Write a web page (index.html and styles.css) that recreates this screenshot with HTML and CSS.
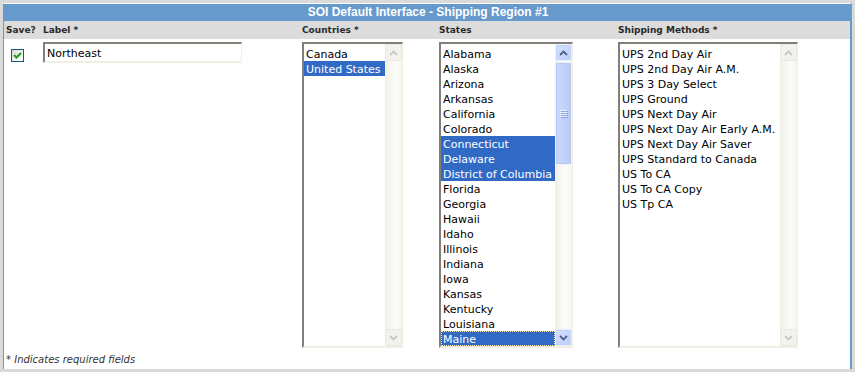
FILE: index.html
```html
<!DOCTYPE html>
<html>
<head>
<meta charset="utf-8">
<link rel="stylesheet" href="styles.css">
</head>
<body>
<div class="frame">
  <div class="title">SOI Default Interface - Shipping Region #1</div>
  <div class="cols head">
    <div>Save?</div>
    <div>Label *</div>
    <div>Countries *</div>
    <div>States</div>
    <div>Shipping Methods *</div>
  </div>
  <div class="cols content">
    <div>
      <div class="chk">
        <svg width="11" height="11" viewBox="0 0 11 11"><polyline points="2,5 4.5,7.5 9,3" fill="none" stroke="#21a121" stroke-width="2.2"/></svg>
      </div>
    </div>
    <div><div class="input">Northeast</div></div>
    <div>
      <div class="lb countries">
        <div class="items">
          <div class="it">Canada</div>
          <div class="it sel">United States</div>
        </div>
        <div class="sb off">
          <div class="btn"><svg width="9" height="6" viewBox="0 0 9 6"><polyline points="1,5 4.5,1.5 8,5" fill="none" stroke="#c9c8c0" stroke-width="1.8"/></svg></div>
          <div class="track"></div>
          <div class="btn"><svg width="9" height="6" viewBox="0 0 9 6"><polyline points="1,1 4.5,4.5 8,1" fill="none" stroke="#c9c8c0" stroke-width="1.8"/></svg></div>
        </div>
      </div>
    </div>
    <div>
      <div class="lb states">
        <div class="items">
          <div class="it">Alabama</div>
          <div class="it">Alaska</div>
          <div class="it">Arizona</div>
          <div class="it">Arkansas</div>
          <div class="it">California</div>
          <div class="it">Colorado</div>
          <div class="it sel">Connecticut</div>
          <div class="it sel">Delaware</div>
          <div class="it sel">District of Columbia</div>
          <div class="it">Florida</div>
          <div class="it">Georgia</div>
          <div class="it">Hawaii</div>
          <div class="it">Idaho</div>
          <div class="it">Illinois</div>
          <div class="it">Indiana</div>
          <div class="it">Iowa</div>
          <div class="it">Kansas</div>
          <div class="it">Kentucky</div>
          <div class="it">Louisiana</div>
          <div class="it sel focus">Maine</div>
        </div>
        <div class="sb on">
          <div class="btn"><svg width="9" height="6" viewBox="0 0 9 6"><polyline points="1,5 4.5,1.5 8,5" fill="none" stroke="#4d6185" stroke-width="1.8"/></svg></div>
          <div class="thumb">
            <svg width="8" height="8" viewBox="0 0 8 8">
              <rect x="0" y="0" width="7" height="1" fill="#eef3ff"/>
              <rect x="1" y="1" width="7" height="1" fill="#8ca6e4"/>
              <rect x="0" y="2" width="7" height="1" fill="#eef3ff"/>
              <rect x="1" y="3" width="7" height="1" fill="#8ca6e4"/>
              <rect x="0" y="4" width="7" height="1" fill="#eef3ff"/>
              <rect x="1" y="5" width="7" height="1" fill="#8ca6e4"/>
              <rect x="0" y="6" width="7" height="1" fill="#eef3ff"/>
              <rect x="1" y="7" width="7" height="1" fill="#8ca6e4"/>
            </svg>
          </div>
          <div class="track"></div>
          <div class="btn"><svg width="9" height="6" viewBox="0 0 9 6"><polyline points="1,1 4.5,4.5 8,1" fill="none" stroke="#4d6185" stroke-width="1.8"/></svg></div>
        </div>
      </div>
    </div>
    <div>
      <div class="lb methods">
        <div class="items">
          <div class="it">UPS 2nd Day Air</div>
          <div class="it">UPS 2nd Day Air A.M.</div>
          <div class="it">UPS 3 Day Select</div>
          <div class="it">UPS Ground</div>
          <div class="it">UPS Next Day Air</div>
          <div class="it">UPS Next Day Air Early A.M.</div>
          <div class="it">UPS Next Day Air Saver</div>
          <div class="it">UPS Standard to Canada</div>
          <div class="it">US To CA</div>
          <div class="it">US To CA Copy</div>
          <div class="it">US Tp CA</div>
        </div>
        <div class="sb off">
          <div class="btn"><svg width="9" height="6" viewBox="0 0 9 6"><polyline points="1,5 4.5,1.5 8,5" fill="none" stroke="#c9c8c0" stroke-width="1.8"/></svg></div>
          <div class="track"></div>
          <div class="btn"><svg width="9" height="6" viewBox="0 0 9 6"><polyline points="1,1 4.5,4.5 8,1" fill="none" stroke="#c9c8c0" stroke-width="1.8"/></svg></div>
        </div>
      </div>
    </div>
  </div>
  <div class="note">* Indicates required fields</div>
</div>
</body>
</html>
```
FILE: styles.css
```css
html, body {
  margin: 0;
  padding: 0;
  background: #dadada;
}
body {
  width: 855px;
  height: 372px;
  overflow: hidden;
  font-family: "DejaVu Sans", Verdana, sans-serif;
}
.frame {
  margin: 3px 0 0 3px;
  width: 849px;
  box-sizing: border-box;
  border-top: 1px solid #ffffff;
  border-left: 1px solid #6699cc;
  border-right: 2px solid #6699cc;
  background: #ffffff;
}
.title {
  height: 17px;
  line-height: 17px;
  background: #6699cc;
  color: #ffffff;
  text-align: center;
  font-family: "Liberation Sans", Arial, sans-serif;
  font-weight: bold;
  font-size: 12px;
  margin-right: -2px;
}
.cols {
  display: grid;
  grid-template-columns: 37px 259px 137px 179px 1fr;
  padding-left: 2px;
}
.head {
  height: 18px;
  box-sizing: border-box;
  padding-top: 1px;
  line-height: 17px;
  background: #dcdcdc;
  font-size: 9px;
  font-weight: bold;
  color: #2a2a2a;
}
.content {
  padding-top: 3px;
  font-size: 11px;
  color: #000000;
}
.chk {
  margin: 7px 0 0 5px;
  width: 13px;
  height: 13px;
  box-sizing: border-box;
  border: 1px solid #1c5180;
  background: linear-gradient(135deg, #dcdcd6, #ffffff);
  display: flex;
  align-items: center;
  justify-content: center;
}
.input {
  width: 199px;
  height: 21px;
  box-sizing: border-box;
  border-style: solid;
  border-width: 2px 1px 2px 2px;
  border-color: #808078 #f1efe4 #f1efe4 #808078;
  line-height: 19px;
  padding-left: 2px;
  overflow: hidden;
}
.lb {
  display: flex;
  height: 306px;
  box-sizing: border-box;
  border-style: solid;
  border-width: 2px 1px 2px 2px;
  border-color: #808078 #f1efe4 #f1efe4 #808078;
}
.countries { width: 101px; }
.states { width: 134px; }
.methods { width: 180px; }
.items {
  flex: 1;
  padding-top: 2px;
  overflow: hidden;
}
.it {
  height: 15px;
  line-height: 17px;
  padding-left: 2px;
  white-space: nowrap;
  overflow: hidden;
}
.sel {
  background: #316ac5;
  color: #ffffff;
}
.focus {
  outline: 1px dotted #f4e8b0;
  outline-offset: -1px;
}
.sb {
  width: 17px;
  display: flex;
  flex-direction: column;
  background: linear-gradient(to right, #f1efe6, #fcfcf9 60%, #f6f5f0);
}
.btn {
  height: 17px;
  box-sizing: border-box;
  border-radius: 2px;
  display: flex;
  align-items: center;
  justify-content: center;
}
.off .btn {
  border: 1px solid #e9e8e1;
  background: #f3f2ec;
}
.on .btn {
  border: 1px solid #e8eefd;
  background: linear-gradient(135deg, #d4e0fe, #bccdf8);
  box-shadow: inset 0 0 0 1px #c4d3fa;
}
.track {
  flex: 1;
}
.thumb {
  height: 103px;
  margin-top: 1px;
  box-sizing: border-box;
  border: 1px solid #eef2fd;
  border-radius: 2px;
  background: linear-gradient(to right, #cad8fd, #bacbf7);
  box-shadow: inset 0 0 0 1px #b5c8f4;
  display: flex;
  align-items: center;
  justify-content: center;
}
.note {
  margin-top: 6px;
  padding: 0 0 3px 2px;
  height: 12px;
  line-height: 12px;
  font-size: 10px;
  font-style: italic;
  color: #333333;
}
```
